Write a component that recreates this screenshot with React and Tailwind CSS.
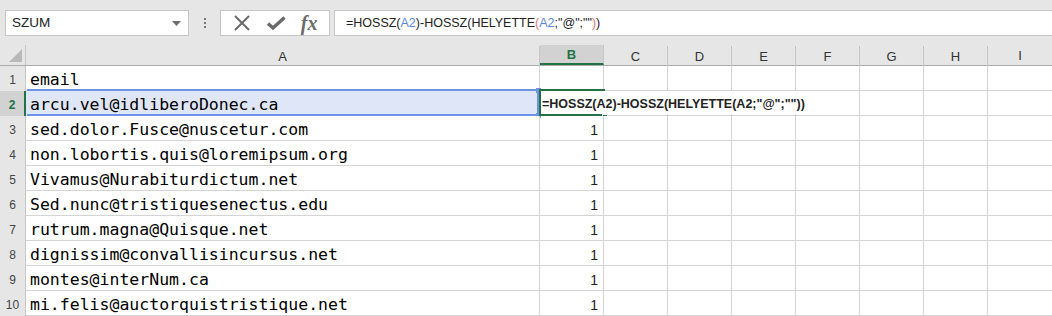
import React from "react";

const cols = [
  { label: "A", w: "w-[514px]" },
  { label: "B", w: "w-[64px]" },
  { label: "C", w: "w-[64px]" },
  { label: "D", w: "w-[64px]" },
  { label: "E", w: "w-[64px]" },
  { label: "F", w: "w-[64px]" },
  { label: "G", w: "w-[64px]" },
  { label: "H", w: "w-[64px]" },
  { label: "I", w: "w-[64px]" },
];

const emails = [
  "email",
  "arcu.vel@idliberoDonec.ca",
  "sed.dolor.Fusce@nuscetur.com",
  "non.lobortis.quis@loremipsum.org",
  "Vivamus@Nurabiturdictum.net",
  "Sed.nunc@tristiquesenectus.edu",
  "rutrum.magna@Quisque.net",
  "dignissim@convallisincursus.net",
  "montes@interNum.ca",
  "mi.felis@auctorquistristique.net",
];

const ui = { fontFamily: '"Liberation Sans", Arial, sans-serif' };
const mono = { fontFamily: '"DejaVu Sans Mono", "Liberation Mono", monospace' };

function Toolbar() {
  return (
    <div className="flex items-start h-[45px] bg-[#e6e6e6] pt-[10px]" style={ui}>
      {/* name box */}
      <div className="ml-[5px] w-[184px] h-[26px] bg-white border border-[#c6c6c6] flex items-center justify-between pl-[6px] pr-[7px]">
        <span className="text-[13.5px] text-[#222]">SZUM</span>
        <svg width="9" height="5" viewBox="0 0 9 5">
          <path d="M0 0h9L4.5 5z" fill="#6d6d6d" />
        </svg>
      </div>
      {/* separator dots */}
      <div className="w-[31px] h-[26px] flex flex-col items-center justify-center gap-[2px]">
        <span className="w-[2px] h-[2px] bg-[#777]" />
        <span className="w-[2px] h-[2px] bg-[#777]" />
        <span className="w-[2px] h-[2px] bg-[#777]" />
      </div>
      {/* cancel / enter / fx */}
      <div className="w-[110px] h-[26px] bg-white border border-[#c6c6c6] flex items-center justify-around px-[4px]">
        <svg width="18" height="18" viewBox="0 0 18 18">
          <path d="M2 2L16 16M16 2L2 16" stroke="#6b6b6b" strokeWidth="2" fill="none" />
        </svg>
        <svg width="20" height="18" viewBox="0 0 20 18">
          <path d="M2 9.5L7 14L18.5 3.5" stroke="#6b6b6b" strokeWidth="3.4" fill="none" />
        </svg>
        <span
          className="text-[20px] italic font-bold text-[#6b6b6b] leading-none"
          style={{ fontFamily: '"Liberation Serif", "Times New Roman", serif' }}
        >
          fx
        </span>
      </div>
      {/* formula input */}
      <div className="ml-[4px] flex-1 h-[26px] bg-white border-y border-l border-[#c6c6c6] flex items-center pl-[11px] pt-[1px]">
        <span className="text-[12.5px] text-[#222] whitespace-nowrap">
          =HOSSZ(<span className="text-[#5b86df]">A2</span>)-HOSSZ(HELYETTE
          <span className="text-[#e0756f]">(</span>
          <span className="text-[#5b86df]">A2</span>;"@";""
          <span className="text-[#e0756f]">)</span>)
        </span>
      </div>
    </div>
  );
}

function HeaderRow() {
  return (
    <div className="flex h-[21px] bg-[#e6e6e6] border-b border-[#ababab]" style={ui}>
      <div className="w-[26px] h-full border-r border-[#c6c6c6] flex items-end justify-end pr-[3px] pb-[3px]">
        <svg width="13" height="13" viewBox="0 0 13 13">
          <path d="M13 0V13H0z" fill="#b9b9b9" />
        </svg>
      </div>
      {cols.map((c) =>
        c.label === "B" ? (
          <div
            key={c.label}
            className={`${c.w} h-full bg-[#d2d2d2] border-r border-[#c6c6c6] border-b-2 border-b-[#217346] flex items-center justify-center text-[13px] font-bold text-[#217346] pt-[2px]`}
          >
            {c.label}
          </div>
        ) : (
          <div
            key={c.label}
            className={`${c.w} h-full flex items-center justify-center text-[13px] text-[#333] pt-[1px] ${c.label === "I" ? "" : "border-r border-[#c6c6c6] mt-[1px]"}`}
          >
            {c.label}
          </div>
        )
      )}
    </div>
  );
}

function Row({ idx, email }) {
  const n = idx + 1;
  const active = n === 2;
  return (
    <div className="relative flex h-[25px] border-b border-[#d4d4d4]">
      <div
        className={`w-[26px] h-[26px] -mb-[1px] flex items-center justify-center pt-[3px] text-[12px] border-r ${
          active
            ? "bg-[#d2d2d2] text-[#217346] font-bold border-r-2 border-r-[#217346] border-b border-b-[#d4d4d4]"
            : "bg-[#e6e6e6] text-[#444] border-[#c6c6c6] border-b border-b-[#d4d4d4]"
        }`}
        style={ui}
      >
        {n}
      </div>
      <div
        className={`w-[514px] h-full border-r border-[#d4d4d4] flex items-center pl-[4px] pt-[4px] text-[16.5px] text-black ${
          active ? "bg-[#dfe6f7]" : "bg-white"
        }`}
        style={mono}
      >
        {email}
      </div>
      <div
        className="w-[64px] h-full border-r border-[#d4d4d4] flex items-center justify-end pr-[5px] pt-[4px] text-[14px] text-[#222]"
        style={ui}
      >
        {n > 2 ? "1" : ""}
      </div>
      {cols.slice(2).map((c) => (
        <div key={c.label} className={`${c.w} h-full bg-white ${c.label === "I" ? "" : "border-r border-[#d4d4d4]"}`} />
      ))}

      {active && (
        <>
          {/* selected range A2 */}
          <div className="absolute left-[27px] top-[-2px] w-[512px] h-[27px] border-y-2 border-r-2 border-[#6c93e6] pointer-events-none" />
          <div className="absolute left-[536px] top-[-3px] w-[5px] h-[5px] bg-[#6c93e6]" />
          <div className="absolute left-[536px] top-[22px] w-[5px] h-[5px] bg-[#6c93e6]" />
          {/* editing cell B2 */}
          <div className="absolute left-[541px] top-0 h-[23px] bg-white flex items-center pl-[1px] pr-[6px] pt-[3px]" style={ui}>
            <span className="text-[12.5px] font-bold text-[#222] whitespace-nowrap">=HOSSZ(A2)-HOSSZ(HELYETTE(A2;"@";""))</span>
          </div>
          <div className="absolute left-[539px] top-[-2px] w-[66px] h-[27px] border-y-2 border-l-2 border-[#217346] pointer-events-none" />
          <div className="absolute left-[602px] top-[23px] w-[6px] h-[6px] bg-[#217346] border border-white" />
        </>
      )}
    </div>
  );
}

export default function App() {
  return (
    <div className="w-[1052px] h-[316px] overflow-hidden bg-white">
      <Toolbar />
      <HeaderRow />
      {emails.map((e, i) => (
        <Row key={i} idx={i} email={e} />
      ))}
    </div>
  );
}
